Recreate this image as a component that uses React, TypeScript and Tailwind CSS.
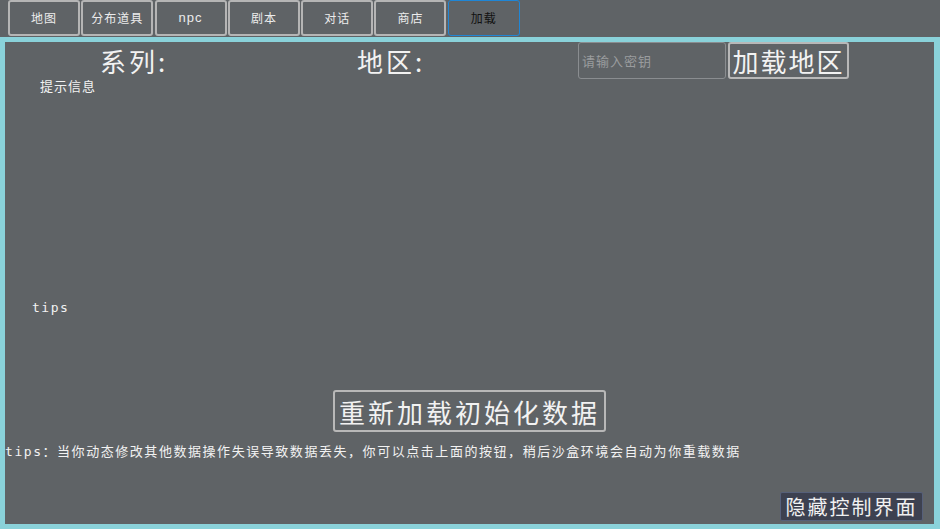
import React from "react";

const tabs = ["地图", "分布道具", "npc", "剧本", "对话", "商店", "加载"];
const cjk = { fontFamily: '"Noto Sans CJK SC", "Noto Sans", sans-serif' };
const mono = { fontFamily: '"DejaVu Sans Mono", "Noto Sans CJK SC", monospace' };

export default function App() {
  return (
    <div className="w-[940px] h-[529px] overflow-hidden flex flex-col bg-[#8ad2da]" style={cjk}>
      <div className="h-[37px] bg-[#5f6366] flex pl-[8px] gap-[1.3px] shrink-0">
        {tabs.map((t, i) => {
          const active = i === tabs.length - 1;
          return (
            <div
              key={t}
              className={
                active
                  ? "w-[72px] h-[36px] rounded-[3px] border border-[#1f86d6] flex items-center justify-center text-[12px] text-[#111] tracking-[1px]"
                  : "w-[72px] h-[36px] rounded-[3px] border-2 border-[#b5b5b5] flex items-center justify-center text-[12px] text-[#ececec] tracking-[1px]"
              }
              style={t === "npc" ? { fontFamily: '"Liberation Sans", sans-serif', fontSize: 13 } : undefined}
            >
              {t}
            </div>
          );
        })}
      </div>
      <div className="mt-[5px] ml-[5px] mr-[6px] mb-[5px] flex-1 bg-[#5f6366] flex flex-col text-[#f2f2f2]">
        <div className="h-[37px] flex items-start shrink-0">
          <div className="w-[95px]" />
          <div className="w-[257px] text-[26px] leading-[37px] tracking-[3px]">系列:</div>
          <div className="w-[221px] text-[26px] leading-[37px] tracking-[3px]">地区:</div>
          <div className="w-[148px] h-[37px] rounded-[3px] border border-[#8a8d90] flex items-center pl-[3px] text-[13px] text-[#9a9c9e] tracking-[1px]">
            请输入密钥
          </div>
          <div className="ml-[2px] w-[121px] h-[37px] rounded-[3px] border-2 border-[#b8b8b8] flex items-center justify-center text-[26px] tracking-[2px]">
            加载地区
          </div>
        </div>
        <div className="h-[221px] pl-[35px] text-[13px] leading-[14px] tracking-[1px]">提示信息</div>
        <div className="h-[90px] pl-[27px] text-[13px] leading-[16px] tracking-[1.5px]" style={mono}>tips</div>
        <div className="flex justify-center h-[42px]">
          <div className="w-[273px] h-[42px] rounded-[3px] border-2 border-[#b8b8b8] flex items-center justify-center text-[26px] tracking-[3px]">
            重新加载初始化数据
          </div>
        </div>
        <div className="pl-0 pt-[12px] text-[13px] leading-[16px] tracking-[1.55px] whitespace-nowrap" style={mono}>
          tips：当你动态修改其他数据操作失误导致数据丢失，你可以点击上面的按钮，稍后沙盒环境会自动为你重载数据
        </div>
        <div className="flex-1" />
        <div className="flex justify-end pr-[11px] pb-[3px]">
          <div className="w-[143px] h-[29px] rounded-[2px] border border-[#56607a] bg-[#3d4150] flex items-center justify-center text-[20px] tracking-[2px] text-[#f0f0f0]">
            隐藏控制界面
          </div>
        </div>
      </div>
    </div>
  );
}
